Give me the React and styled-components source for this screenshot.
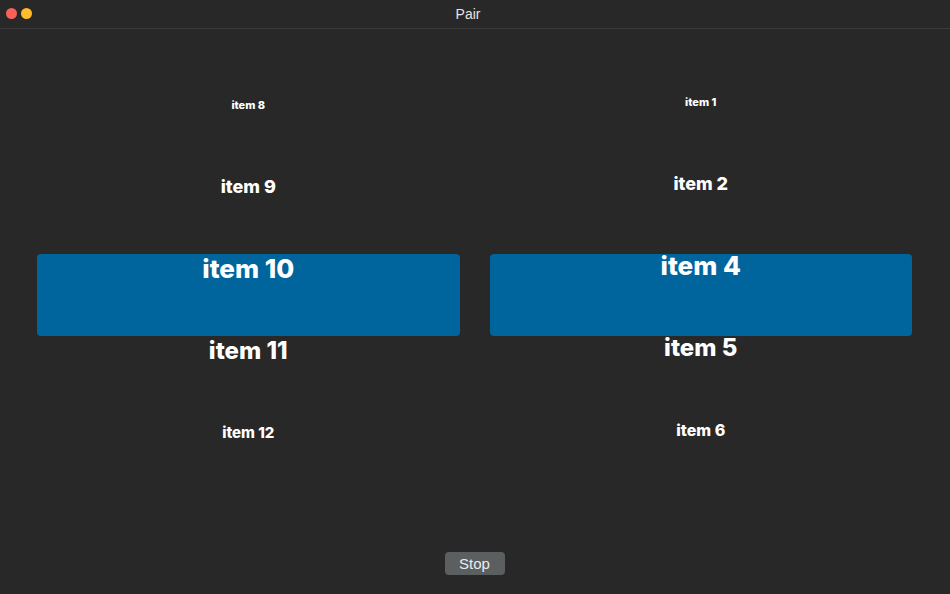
import { createGlobalStyle } from 'styled-components';
import styled from 'styled-components';

const GlobalStyle = createGlobalStyle`
   html, body {
      margin: 0;
      padding: 0;
      background: #282828;
      height: 100%;
   }
   #root {
      height: 100%;
   }
`;

const Window = styled.div`
   display: flex;
   flex-direction: column;
   height: 594px;
   background: #282828;
   font-family: Inter, 'Noto Sans', sans-serif;
   color: #ffffff;
   overflow: hidden;
`;

const TitleBar = styled.div`
   position: relative;
   display: flex;
   align-items: center;
   justify-content: center;
   height: 28px;
   padding-right: 14px;
   border-bottom: 1px solid #3b3b3b;
   flex-shrink: 0;
   & h1 {
      margin: 0;
      font-family: 'Liberation Sans', Arial, sans-serif;
      font-size: 14px;
      font-weight: 400;
      color: #e4e4e4;
   }
`;

const Lights = styled.div`
   position: absolute;
   left: 6px;
   top: 8px;
   display: flex;
   gap: 4px;
`;

const Light = styled.span`
   width: 11px;
   height: 11px;
   border-radius: 50%;
   background: ${(p) => p.$color};
`;

const Main = styled.div`
   flex: 1;
   display: flex;
   flex-direction: column;
   padding: 61px 38px 19px 37px;
`;

const Columns = styled.div`
   display: grid;
   grid-template-columns: 1fr 1fr;
   column-gap: 30px;
   flex: 1;
`;

const Column = styled.div`
   display: flex;
   flex-direction: column;
`;

const Row = styled.div`
   height: 82px;
   border-radius: 4px;
   background: ${(p) => (p.$selected ? '#00659c' : 'transparent')};
   display: flex;
   justify-content: center;
`;

const Label = styled.span`
   font-weight: 800;
   font-size: ${(p) => p.$size}px;
   line-height: ${(p) => p.$line}px;
   white-space: nowrap;
`;

const Footer = styled.div`
   display: flex;
   justify-content: center;
`;

const StopButton = styled.button`
   width: 60px;
   height: 23px;
   border: none;
   border-radius: 4px;
   background: #5b5f60;
   color: #ececec;
   font-family: 'Liberation Sans', Arial, sans-serif;
   font-size: 15px;
   padding: 0;
   cursor: pointer;
`;

const left = [
   { name: 'item 8', size: 11 },
   { name: 'item 9', size: 18 },
   { name: 'item 10', size: 26, selected: true },
   { name: 'item 11', size: 24 },
   { name: 'item 12', size: 15 },
];

const right = [
   { name: 'item 1', size: 11 },
   { name: 'item 2', size: 18 },
   { name: 'item 4', size: 26, selected: true },
   { name: 'item 5', size: 24 },
   { name: 'item 6', size: 16 },
];

const App = () => {
   return (
      <Window>
         <GlobalStyle />
         <TitleBar>
            <Lights>
               <Light $color='#fe5f57' />
               <Light $color='#febc2e' />
            </Lights>
            <h1>Pair</h1>
         </TitleBar>
         <Main>
            <Columns>
               <Column>
                  {left.map((item) => (
                     <Row key={item.name} $selected={item.selected}>
                        <Label $size={item.size} $line={30}>
                           {item.name}
                        </Label>
                     </Row>
                  ))}
               </Column>
               <Column>
                  {right.map((item) => (
                     <Row key={item.name} $selected={item.selected}>
                        <Label $size={item.size} $line={24}>
                           {item.name}
                        </Label>
                     </Row>
                  ))}
               </Column>
            </Columns>
            <Footer>
               <StopButton>Stop</StopButton>
            </Footer>
         </Main>
      </Window>
   );
};
export default App;
